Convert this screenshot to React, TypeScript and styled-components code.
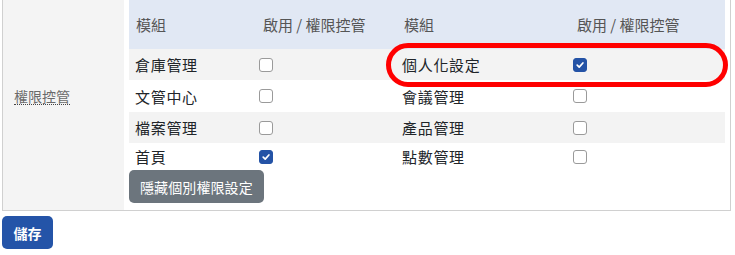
import React from "react";
import styled, { createGlobalStyle } from "styled-components";

const Global = createGlobalStyle`
  html, body { margin: 0; padding: 0; background: #fff; }
  body { font-family: "Noto Sans CJK TC", "Noto Sans", sans-serif; font-size: 14px; color: #212529; }
  *, *::before, *::after { box-sizing: border-box; }
`;

const Page = styled.div`
  padding: 0 5px 0 2px;
`;

const Outer = styled.div`
  display: flex;
  width: 729px;
  border: 1px solid #d0d0d0;
  border-top: none;
`;

const LabelCell = styled.div`
  width: 121px;
  background: #f4f4f4;
  display: flex;
  align-items: center;
  padding-left: 11px;
  padding-bottom: 18px;
`;

const Label = styled.span`
  color: #6a6a6a;
  font-size: 14px;
  line-height: 16px;
  border-bottom: 1px dotted #444;
`;

const ContentCell = styled.div`
  flex: 1;
  padding: 0 4px 7px 5px;
  background: #fff;
`;

const TableWrap = styled.div`
  position: relative;
`;

const Grid = styled.div`
  display: grid;
  grid-template-columns: 127px 141px 173px 155px;
`;

const Row = styled.div<{ $bg: string; $h: number }>`
  display: contents;
  & > div {
    background: ${(p) => p.$bg};
    height: ${(p) => p.$h}px;
  }
`;

const HeadCell = styled.div`
  display: flex;
  align-items: center;
  padding-left: 7px;
  color: #555;
  font-size: 15px;
  line-height: 1;
  padding-bottom: 1px;
`;

const Cell = styled.div<{ $pad: number }>`
  display: flex;
  align-items: center;
  padding-left: ${(p) => p.$pad}px;
  font-size: 15px;
  line-height: 1;
  letter-spacing: 0.7px;
  color: #212529;
`;

const Box = styled.span<{ $on: boolean }>`
  width: 14px;
  height: 14px;
  border-radius: 3px;
  border: 1px solid ${(p) => (p.$on ? "#2453a6" : "#9a9a9a")};
  background: ${(p) => (p.$on ? "#2453a6" : "#fff")};
  display: flex;
  align-items: center;
  justify-content: center;
`;

const Highlight = styled.div`
  position: absolute;
  left: 257px;
  top: 43px;
  width: 342px;
  height: 44px;
  border: 5px solid #ff0000;
  border-radius: 22px;
  pointer-events: none;
`;

const GrayButton = styled.button`
  height: 33px;
  padding: 0 11px;
  background: #6c757d;
  color: #fff;
  border: none;
  border-radius: 5px;
  font-family: inherit;
  font-size: 14px;
  letter-spacing: 0.1px;
  display: block;
`;

const SaveButton = styled.button`
  margin-top: 5px;
  height: 33px;
  width: 51px;
  background: #2454a8;
  color: #fff;
  border: none;
  border-radius: 5px;
  font-family: inherit;
  font-size: 14px;
  font-weight: bold;
  display: block;
`;

const Check: React.FC<{ on: boolean }> = ({ on }) => (
  <Box $on={on}>
    {on && (
      <svg width="10" height="10" viewBox="0 0 10 10">
        <path d="M2.2 5.2 L4.2 7.1 L7.9 3" stroke="#fff" strokeWidth="1.7" fill="none" strokeLinecap="round" strokeLinejoin="round" />
      </svg>
    )}
  </Box>
);

const rows = [
  { a: "倉庫管理", aOn: false, b: "個人化設定", bOn: true, bg: "#f3f3f3", h: 31 },
  { a: "文管中心", aOn: false, b: "會議管理", bOn: false, bg: "#ffffff", h: 32 },
  { a: "檔案管理", aOn: false, b: "產品管理", bOn: false, bg: "#f3f3f3", h: 31 },
  { a: "首頁", aOn: true, b: "點數管理", bOn: false, bg: "#ffffff", h: 27 },
];

export default function App() {
  return (
    <Page>
      <Global />
      <Outer>
        <LabelCell>
          <Label>權限控管</Label>
        </LabelCell>
        <ContentCell>
          <TableWrap>
            <Grid>
              <Row $bg="#e1e8f4" $h={49}>
                <HeadCell>模組</HeadCell>
                <HeadCell>啟用 / 權限控管</HeadCell>
                <HeadCell>模組</HeadCell>
                <HeadCell>啟用 / 權限控管</HeadCell>
              </Row>
              {rows.map((r) => (
                <Row key={r.a} $bg={r.bg} $h={r.h}>
                  <Cell $pad={6}>{r.a}</Cell>
                  <Cell $pad={3}>
                    <Check on={r.aOn} />
                  </Cell>
                  <Cell $pad={5}>{r.b}</Cell>
                  <Cell $pad={3}>
                    <Check on={r.bOn} />
                  </Cell>
                </Row>
              ))}
            </Grid>
            <Highlight />
          </TableWrap>
          <GrayButton>隱藏個別權限設定</GrayButton>
        </ContentCell>
      </Outer>
      <SaveButton>儲存</SaveButton>
    </Page>
  );
}
